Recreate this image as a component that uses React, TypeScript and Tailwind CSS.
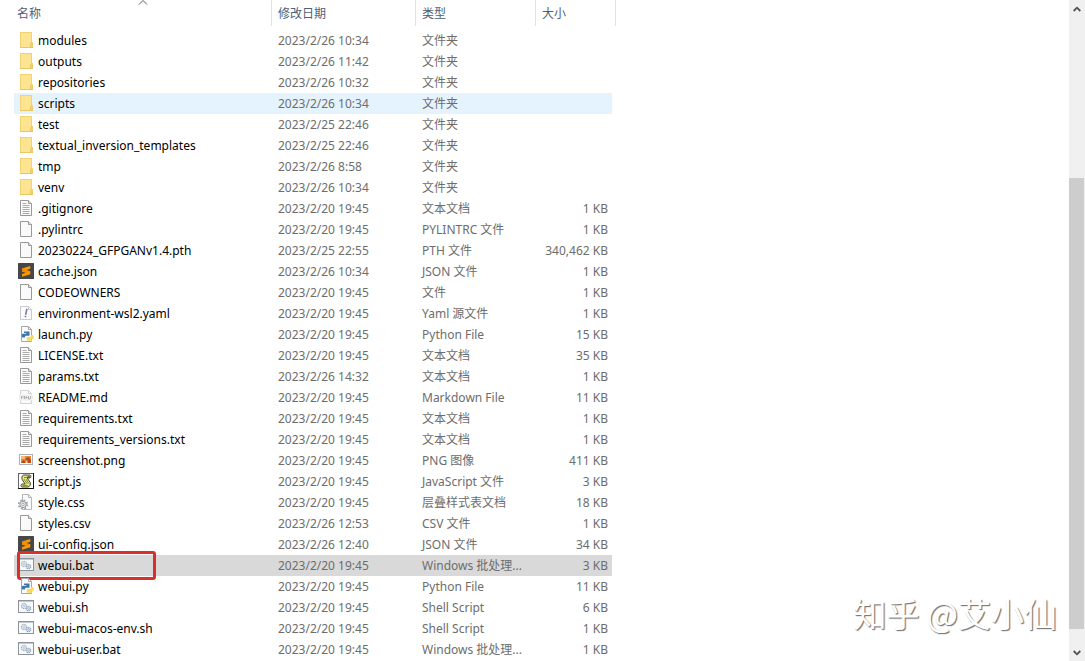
import type { ReactNode } from "react";

type IconKind =
  | "folder"
  | "text"
  | "blank"
  | "sublime"
  | "yaml"
  | "python"
  | "markdown"
  | "image"
  | "script"
  | "css"
  | "batch";

interface FileEntry {
  name: string;
  date: string;
  type: string;
  size?: string;
  icon: IconKind;
  state?: "hovered" | "selected";
}

const files: FileEntry[] = [
  { name: "modules", date: "2023/2/26 10:34", type: "文件夹", icon: "folder" },
  { name: "outputs", date: "2023/2/26 11:42", type: "文件夹", icon: "folder" },
  { name: "repositories", date: "2023/2/26 10:32", type: "文件夹", icon: "folder" },
  { name: "scripts", date: "2023/2/26 10:34", type: "文件夹", icon: "folder", state: "hovered" },
  { name: "test", date: "2023/2/25 22:46", type: "文件夹", icon: "folder" },
  { name: "textual_inversion_templates", date: "2023/2/25 22:46", type: "文件夹", icon: "folder" },
  { name: "tmp", date: "2023/2/26 8:58", type: "文件夹", icon: "folder" },
  { name: "venv", date: "2023/2/26 10:34", type: "文件夹", icon: "folder" },
  { name: ".gitignore", date: "2023/2/20 19:45", type: "文本文档", size: "1 KB", icon: "text" },
  { name: ".pylintrc", date: "2023/2/20 19:45", type: "PYLINTRC 文件", size: "1 KB", icon: "blank" },
  { name: "20230224_GFPGANv1.4.pth", date: "2023/2/25 22:55", type: "PTH 文件", size: "340,462 KB", icon: "blank" },
  { name: "cache.json", date: "2023/2/26 10:34", type: "JSON 文件", size: "1 KB", icon: "sublime" },
  { name: "CODEOWNERS", date: "2023/2/20 19:45", type: "文件", size: "1 KB", icon: "blank" },
  { name: "environment-wsl2.yaml", date: "2023/2/20 19:45", type: "Yaml 源文件", size: "1 KB", icon: "yaml" },
  { name: "launch.py", date: "2023/2/20 19:45", type: "Python File", size: "15 KB", icon: "python" },
  { name: "LICENSE.txt", date: "2023/2/20 19:45", type: "文本文档", size: "35 KB", icon: "text" },
  { name: "params.txt", date: "2023/2/26 14:32", type: "文本文档", size: "1 KB", icon: "text" },
  { name: "README.md", date: "2023/2/20 19:45", type: "Markdown File", size: "11 KB", icon: "markdown" },
  { name: "requirements.txt", date: "2023/2/20 19:45", type: "文本文档", size: "1 KB", icon: "text" },
  { name: "requirements_versions.txt", date: "2023/2/20 19:45", type: "文本文档", size: "1 KB", icon: "text" },
  { name: "screenshot.png", date: "2023/2/20 19:45", type: "PNG 图像", size: "411 KB", icon: "image" },
  { name: "script.js", date: "2023/2/20 19:45", type: "JavaScript 文件", size: "3 KB", icon: "script" },
  { name: "style.css", date: "2023/2/20 19:45", type: "层叠样式表文档", size: "18 KB", icon: "css" },
  { name: "styles.csv", date: "2023/2/26 12:53", type: "CSV 文件", size: "1 KB", icon: "blank" },
  { name: "ui-config.json", date: "2023/2/26 12:40", type: "JSON 文件", size: "34 KB", icon: "sublime" },
  { name: "webui.bat", date: "2023/2/20 19:45", type: "Windows 批处理...", size: "3 KB", icon: "batch", state: "selected" },
  { name: "webui.py", date: "2023/2/20 19:45", type: "Python File", size: "11 KB", icon: "python" },
  { name: "webui.sh", date: "2023/2/20 19:45", type: "Shell Script", size: "6 KB", icon: "batch" },
  { name: "webui-macos-env.sh", date: "2023/2/20 19:45", type: "Shell Script", size: "1 KB", icon: "batch" },
  { name: "webui-user.bat", date: "2023/2/20 19:45", type: "Windows 批处理...", size: "1 KB", icon: "batch" },
];

const page = (
  <>
    <path d="M2.5 .5h8l3 3v12h-11z" fill="#fafafa" stroke="#989898" />
    <path d="M10.5 .5v3h3" fill="#e4e4e4" stroke="#989898" />
  </>
);

const pythonMark = (
  <>
    <path d="M6 5.500h5.500v4.200H8.300c-1 0-1.400.6-1.400 1.800H4.600c-1-.2-1.200-3.400 0-3.800h3.600V7H6z" fill="#3f76a8" />
    <path d="M14 14.800H8.800v-3.900h3c1 0 1.400-.6 1.400-1.900h1.400c1.400.3 1.500 3.600.2 4.200h-2.600v.5H14z" fill="#f9dc56" />
  </>
);

const drawings: Record<IconKind, ReactNode> = {
  folder: (
    <>
      <path d="M2 0h12v10l1 .5V16H2z" fill="#f3d273" />
      <path d="M3 1h10v14H3z" fill="#fde491" />
      <path d="M12.500 15v-3.500l1.500-1V15z" fill="#fbdf87" stroke="#e6c362" strokeWidth=".8" />
      <path d="M2 15.500h13" stroke="#e8c565" />
    </>
  ),
  text: (
    <>
      {page}
      <path d="M4.500 3.500h4M4.500 5.500h7M4.500 7.500h7M4.500 9.500h7M4.500 11.500h7M4.500 13.500h7" stroke="#acacac" />
    </>
  ),
  blank: page,
  sublime: (
    <>
      <rect width="16" height="16" rx=".5" fill="#474747" />
      <path d="M12.300 3v2.700L8.200 7l4.100 1.300v2.900L4 13.800v-2.700l4.200-1.400L4 8.400V5.500z" fill="#ff9800" />
      <path d="M4 8.400l4.200 1.300 4.100-1.300L8.200 7 4 5.600z" fill="#f28c00" />
    </>
  ),
  yaml: (
    <>
      <path d="M2.500 1.500h8l3 3v10h-11z" fill="#fcfcff" stroke="#c9c9d1" />
      <path d="M10.500 1.500v3h3" fill="none" stroke="#c9c9d1" />
      <path d="M8.800 4.500l-1 4.500M7.400 11.500h.1" stroke="#74749c" strokeWidth="1.500" strokeLinecap="square" />
    </>
  ),
  python: (
    <>
      <path d="M3.500 .5h7l3 3v12h-10z" fill="#fbfbfb" stroke="#a8a8a8" />
      <path d="M10.500 .5v3h3" fill="none" stroke="#a8a8a8" />
      {pythonMark}
    </>
  ),
  markdown: (
    <>
      <path d="M2.500 1.500h8l3 3v10h-11z" fill="#fafafa" stroke="#d2d2d2" />
      <path d="M10.500 1.500v3h3" fill="none" stroke="#d2d2d2" />
      <rect x="1" y="5.500" width="14" height="6" rx="1" fill="#f0f0f0" />
      <path d="M3.500 10V7l1.500 1.500L6.500 7v3M8 7v3M8 8.500h1.800M10.500 7v3h1.500M12.500 7v3" fill="none" stroke="#a3a3a3" strokeWidth=".8" />
    </>
  ),
  image: (
    <>
      <rect x="1.500" y="2.500" width="13" height="10" fill="#fff" stroke="#a9b1b9" />
      <rect x="3" y="4" width="10" height="7" fill="#e68a3c" />
      <path d="M3 4h4v3H3z" fill="#f6ba78" />
      <path d="M3 11l2-3 2 1 1-3 3-1 2 3v3z" fill="#bd4b12" />
      <path d="M7.500 8.500h2V11h-2z" fill="#f3cf9c" />
    </>
  ),
  script: (
    <>
      <rect x=".5" y=".5" width="15" height="15" fill="#fff" stroke="#666" />
      <path d="M15.500 0v15.500H0" fill="none" stroke="#111" />
      <path
        d="M5.500 2h6.500c1.300.6 1.200 2.600 0 3H9.200l3 4.500c.8 1.900-.4 4.300-2.200 4.500H4c-1.500-.4-1.400-2.800.1-3h3L4.300 6.800C3.500 5.200 3.700 2.800 5.500 2z"
        fill="#e5e872"
        stroke="#333"
        strokeWidth=".9"
      />
      <path d="M6 4.500h3.500M6 6.200l3.200 4.600M8 6.200l2.800 4.200M4.500 12.500h5" stroke="#5a602b" strokeWidth=".7" />
      <path d="M9.500 3.200h2.300v1.500H9.500z" fill="#3d4325" />
    </>
  ),
  css: (
    <>
      <path d="M4.500 .5h6l3 3v12h-9z" fill="#fafafa" stroke="#b7b7b7" />
      <path d="M10.500 .5v3h3" fill="none" stroke="#b7b7b7" />
      <circle cx="5" cy="10.500" r="4.300" fill="none" stroke="#9aa0a4" strokeWidth="1.600" strokeDasharray="1.800 1.577" />
      <circle cx="5" cy="10.500" r="3.200" fill="#e4e8ea" stroke="#949a9e" />
      <circle cx="5" cy="10.500" r="1.200" fill="#fff" stroke="#949a9e" strokeWidth=".8" />
    </>
  ),
  batch: (
    <>
      <rect x=".5" y="1.500" width="15" height="12" fill="#f8fafc" stroke="#8d9399" />
      <path d="M1 2.500h14" stroke="#c3c8cd" />
      <circle cx="6" cy="7" r="2.600" fill="#e9eff5" stroke="#a3b1c0" strokeWidth="1.100" strokeDasharray="1.400 .5" />
      <circle cx="6" cy="7" r="1" fill="#fff" stroke="#a3b1c0" strokeWidth=".7" />
      <circle cx="10.500" cy="9.500" r="2.200" fill="#e0eaf5" stroke="#8ba4c0" strokeWidth="1.100" strokeDasharray="1.300 .5" />
      <circle cx="10.500" cy="9.500" r=".8" fill="#fff" stroke="#8ba4c0" strokeWidth=".7" />
    </>
  ),
};

function FileIcon({ kind }: { kind: IconKind }) {
  return (
    <svg viewBox="0 0 16 16" className="size-4 shrink-0" aria-hidden="true">
      {drawings[kind]}
    </svg>
  );
}

function Heading({ label, className, sorted, span }: { label: string; className: string; sorted?: boolean; span?: number }) {
  return (
    <th colSpan={span} className="h-[30px] p-0 align-top font-normal" aria-sort={sorted ? "ascending" : undefined}>
      <button type="button" className={`relative block h-[26px] w-full border-r border-[#e2e2e2] text-left text-[#4c607a] ${className}`}>
        {label}
        {sorted && (
          <svg viewBox="0 0 10 5" className="absolute top-0 left-1/2 h-[5px] w-[10px] -translate-x-1/2" aria-hidden="true">
            <path d="M1 4.500l4-4 4 4" fill="none" stroke="#5a5a5a" />
          </svg>
        )}
      </button>
    </th>
  );
}

const rowColour = {
  hovered: "bg-[#e5f3ff]",
  selected: "bg-[#d9d9d9]",
  plain: "",
};

function FileRow({ file }: { file: FileEntry }) {
  const colour = rowColour[file.state ?? "plain"];
  return (
    <tr className="h-[21px]" aria-selected={file.state === "selected"}>
      <td className={`relative p-0 ${colour}`}>
        <div className="flex h-[21px] gap-1 pl-1 text-black">
          <span className="flex pt-0.5">
            <FileIcon kind={file.icon} />
          </span>
          <span>{file.name}</span>
        </div>
        {file.state === "selected" && (
          <div className="absolute -top-1 left-[3px] h-[29px] w-[139px] rounded-[3px] border-3 border-[#d9302a]" />
        )}
      </td>
      <td className={`p-0 pl-1.5 ${colour}`}>{file.date}</td>
      <td className={`p-0 pl-1.5 ${colour}`}>{file.type}</td>
      <td className={`p-0 pr-1 text-right ${colour}`}>{file.size}</td>
    </tr>
  );
}

function ScrollBar() {
  return (
    <div className="flex w-4 shrink-0 flex-col bg-[#f0f0f0]">
      <button type="button" aria-label="向上滚动" className="flex h-[17px] items-center justify-center">
        <svg viewBox="0 0 8 6" className="h-[6px] w-2" aria-hidden="true">
          <path d="M.7 5L4 1.700 7.300 5" fill="none" stroke="#505050" strokeWidth="1.800" />
        </svg>
      </button>
      <div className="flex flex-1 flex-col pr-px">
        <div className="flex-[161]" />
        <div className="flex-[451] bg-[#cdcdcd]" />
        <div className="flex-[15]" />
      </div>
      <button type="button" aria-label="向下滚动" className="flex h-[17px] items-center justify-center">
        <svg viewBox="0 0 8 6" className="h-[6px] w-2" aria-hidden="true">
          <path d="M.7 1L4 4.300 7.300 1" fill="none" stroke="#505050" strokeWidth="1.800" />
        </svg>
      </button>
    </div>
  );
}

export default function App() {
  return (
    <div className="flex min-h-screen bg-white font-['Noto_Sans','Noto_Sans_CJK_SC',sans-serif] text-[12px] leading-[21px] text-[#6d6d6d]">
      <main className="relative min-w-0 flex-1 pl-[14px]">
        <table className="w-[602px] table-fixed border-separate border-spacing-0 whitespace-nowrap">
          <colgroup>
            <col className="w-[258px]" />
            <col className="w-[144px]" />
            <col className="w-[120px]" />
            <col className="w-[76px]" />
            <col className="w-1" />
          </colgroup>
          <thead>
            <tr>
              <Heading label="名称" className="pl-[3px]" sorted />
              <Heading label="修改日期" className="pl-1.5" />
              <Heading label="类型" className="pl-1.5" />
              <Heading label="大小" className="pl-1.5" span={2} />
            </tr>
          </thead>
          <tbody>
            {files.map((file) => (
              <FileRow key={file.name} file={file} />
            ))}
          </tbody>
        </table>
        <p className="absolute right-3 bottom-7 font-['Noto_Sans_CJK_SC',sans-serif] text-[33px] leading-10 text-white [text-shadow:1px_1px_1px_#777,1px_1px_1px_#aaa]">
          知乎 @艾小仙
        </p>
      </main>
      <ScrollBar />
    </div>
  );
}
